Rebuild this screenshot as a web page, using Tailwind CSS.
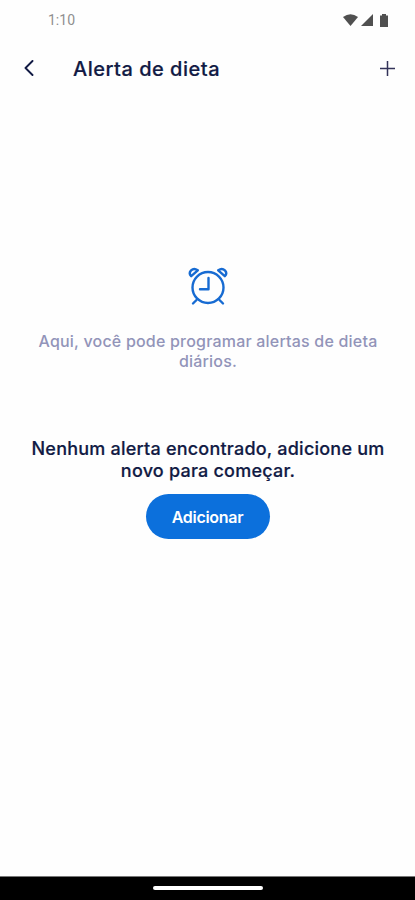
<!DOCTYPE html>
<html lang="pt-BR">
<head>
  <meta charset="UTF-8">
  <meta name="viewport" content="width=device-width, initial-scale=1.0">
  <title>Alerta de dieta</title>
  <script src="https://cdn.jsdelivr.net/npm/@tailwindcss/browser@4"></script>
</head>
<body class="h-screen overflow-hidden flex flex-col bg-[#fefefe] text-[#111a44] font-['Inter',sans-serif]">
  <!-- Status bar -->
  <div class="h-10 shrink-0 flex items-center justify-between pl-[48px] pr-[27px]">
    <span class="font-['Roboto',sans-serif] text-[14px] leading-5 text-[#8f8f8f]">1:10</span>
    <div class="flex items-center text-[#505050]">
      <svg class="w-[15px] h-3" viewBox="0 0 15 12" fill="currentColor"><path d="M0 3Q7.500-2.500 15 3L7.500 12Z"/></svg>
      <svg class="w-3 h-3 ml-[3px]" viewBox="0 0 12 12" fill="currentColor"><path d="M12 0V12H0Z"/></svg>
      <svg class="w-2 h-[13px] ml-[7px]" viewBox="0 0 8 13" fill="currentColor"><path d="M2 0h4v1.500H8V13H0V1.500h2Z"/></svg>
    </div>
  </div>

  <!-- Header -->
  <header class="h-14 shrink-0 flex items-center pl-6 pr-5">
    <svg class="w-[10px] h-4" viewBox="0 0 10 16" fill="none" stroke="currentColor" stroke-width="1.900" stroke-linecap="round" stroke-linejoin="round"><path d="M8.500 1L1.500 8l7 7"/></svg>
    <h1 class="ml-[39px] pt-0.5 text-[20px] leading-7 font-medium tracking-[0.5px] whitespace-nowrap [-webkit-text-stroke:0.2px]">Alerta de dieta</h1>
    <svg class="w-[15px] h-[15px] ml-auto" viewBox="0 0 15 15" fill="none" stroke="#333359" stroke-width="1.500"><path d="M7.500 0v15M0 7.500h15"/></svg>
  </header>

  <main class="flex-1 flex flex-col items-center pt-[170px] text-center">
    <svg class="w-10 h-10" viewBox="0 0 40 40" fill="none" stroke="#176bd2" stroke-width="2.400" stroke-linecap="round" stroke-linejoin="round">
      <circle cx="20" cy="21.500" r="15.500"/>
      <path d="M20.500 12v11.200H12"/>
      <path d="M8.500 34L5 37.500M31.500 34l3.500 3.500"/>
      <path d="M3.200 10.200C-.5 6.200 4.500 .7 9.800 4.300Z"/>
      <path d="M36.800 10.200C40.500 6.200 35.500 .7 30.200 4.300Z"/>
    </svg>
    <p class="mt-[25px] ml-px text-[16px] leading-5 font-medium text-[#9294b9] tracking-[0.2px] whitespace-nowrap">Aqui, você pode programar alertas de dieta<br>diários.</p>
    <p class="mt-[67px] ml-px text-[18px] leading-[22px] font-medium tracking-[0.22px] whitespace-nowrap [-webkit-text-stroke:0.2px]">Nenhum alerta encontrado, adicione um<br>novo para começar.</p>
    <button class="mt-[12px] w-[124px] h-[45px] rounded-full bg-[#0c70dc] text-white text-[16px] font-semibold tracking-[-0.3px]">Adicionar</button>
  </main>

  <!-- Navigation bar -->
  <div class="h-6 shrink-0 flex justify-center border-t border-[#777] bg-black">
    <div class="w-[110px] h-1 mt-[9px] rounded-full bg-white"></div>
  </div>
</body>
</html>
